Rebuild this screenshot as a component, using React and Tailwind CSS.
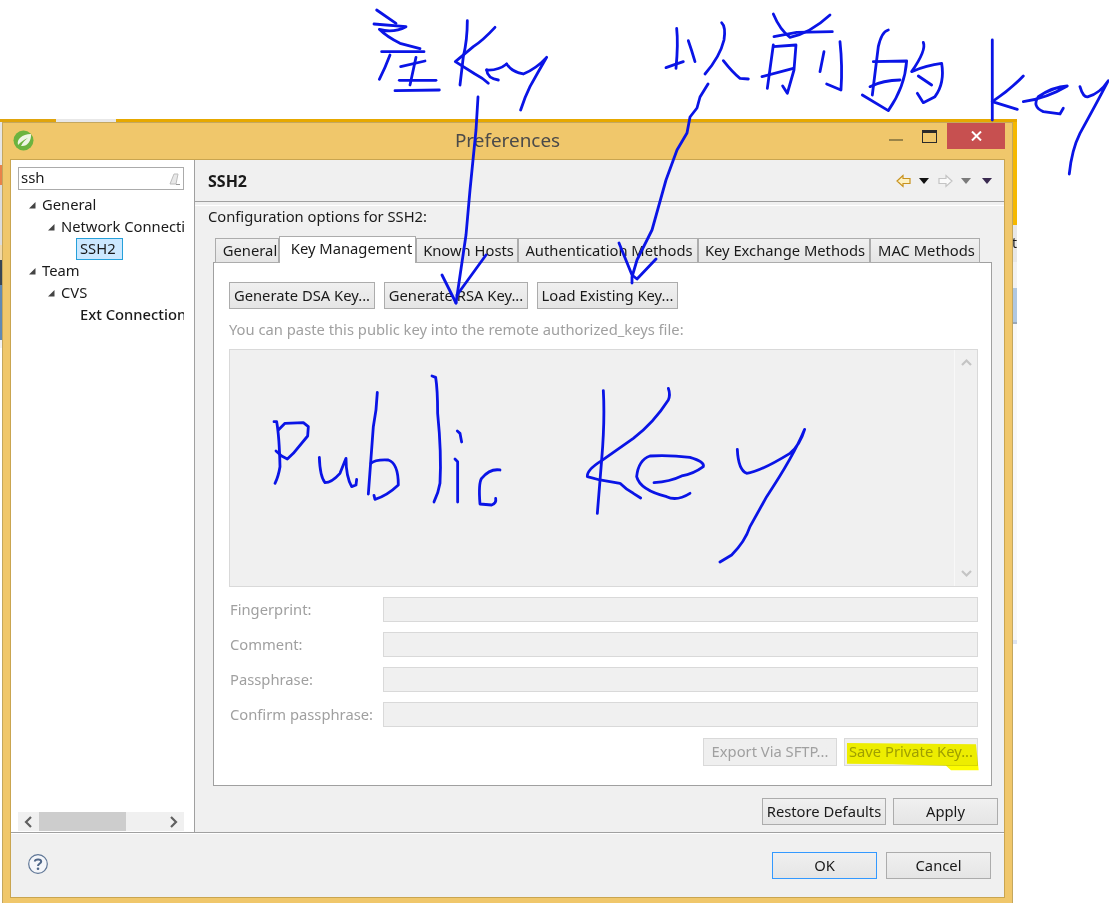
import React from 'react';

const tree = [
  { label: 'General', depth: 0, open: true },
  { label: 'Network Connections', depth: 1, open: true },
  { label: 'SSH2', depth: 2, selected: true },
  { label: 'Team', depth: 0, open: true },
  { label: 'CVS', depth: 1, open: true },
  { label: 'Ext Connection Method', depth: 2, semi: true },
];

const tabs = [
  { label: 'General', w: 'w-[64px] pl-[6px]' },
  { label: 'Key Management', w: 'w-[137px] pl-[8px]', active: true },
  { label: 'Known Hosts', w: 'w-[102px] pl-[3px]' },
  { label: 'Authentication Methods', w: 'w-[180px] pl-[2px]' },
  { label: 'Key Exchange Methods', w: 'w-[172px] pl-[2px]' },
  { label: 'MAC Methods', w: 'w-[110px] pl-[3px]' },
];

const fields = ['Fingerprint:', 'Comment:', 'Passphrase:', 'Confirm passphrase:'];

function Btn({ children, className = '', disabled }) {
  return (
    <button
      className={`flex items-center justify-center pb-[1px] border bg-gradient-to-b ${
        disabled
          ? 'border-[#d9d9d9] from-[#efefef] to-[#efefef] text-[#a0a0a0]'
          : 'border-[#acacac] from-[#f0f0f0] to-[#e5e5e5] text-[#1a1a1a]'
      } ${className}`}
    >
      {children}
    </button>
  );
}

function Triangle() {
  return (
    <svg width="8" height="8" viewBox="0 0 8 8" className="shrink-0">
      <path d="M7.5 1L7.5 7.5L1 7.5Z" fill="#444" />
    </svg>
  );
}

function SpringLogo() {
  return (
    <svg width="21" height="21" viewBox="0 0 21 21">
      <circle cx="10.5" cy="10.5" r="10" fill="#6cb33f" />
      <path d="M5 15C3.5 9 9 4.5 18 4C18.5 11 14 17 8 16C10 12 12 10 15 8C11 9.500 8 12 5 15Z" fill="#eef5e4" />
    </svg>
  );
}

function NavArrow({ dir, active }) {
  const d = dir === 'left' ? 'M7 1.500L1 7L7 12.500V9.500H14V4.500H7Z' : 'M8 1.500L14 7L8 12.500V9.500H1V4.500H8Z';
  return (
    <svg width="15" height="14" viewBox="0 0 15 14">
      <path d={d} fill={active ? '#fdf0c0' : '#fafafa'} stroke={active ? '#c8921e' : '#c4c4c4'} strokeWidth="1.200" />
    </svg>
  );
}

function DropTri({ color }) {
  return (
    <svg width="10" height="6" viewBox="0 0 10 6">
      <path d="M0 0H10L5 6Z" fill={color} />
    </svg>
  );
}

function Chevron({ d, color, w = 9, h = 12 }) {
  return (
    <svg width={w} height={h} viewBox={`0 0 ${w} ${h}`}>
      <path d={d} fill="none" stroke={color} strokeWidth="2.200" />
    </svg>
  );
}

// yellow marker over the Save Private Key button
function Highlight() {
  return (
    <svg
      width="134"
      height="30"
      viewBox="503 65 402 90"
      className="absolute left-[847px] top-[742px] z-20 mix-blend-multiply pointer-events-none"
    >
      <path d="M503 68L890 72L898 150L815 150L800 136L640 132L503 130Z" fill="#fdfd00" />
    </svg>
  );
}

// the pen strokes drawn over the screenshot, coordinates as read off the 3x crops
function Scribbles() {
  return (
    <svg
      width="1109"
      height="903"
      viewBox="0 0 1109 903"
      fill="none"
      stroke="#0a14e6"
      strokeLinecap="round"
      strokeLinejoin="round"
      className="absolute left-0 top-0 z-20 pointer-events-none"
    >
      <g transform="translate(350 0) scale(0.3333)" strokeWidth="8.400">
        <path d="M80 30L138 70" />
        <path d="M72 72L168 80Q130 100 88 88Q110 110 150 130L210 146" />
        <path d="M95 155L222 155" />
        <path d="M120 165Q105 205 88 238" />
        <path d="M152 200L225 183" />
        <path d="M198 172L180 255" />
        <path d="M148 241L258 241" />
        <path d="M135 272L268 270" />
        <path d="M352 62Q352 120 340 170L330 255" />
        <path d="M435 82Q400 120 370 140L316 185L375 222Q400 235 415 250" />
        <path d="M410 210Q445 212 470 192" />
        <path d="M410 210Q412 235 445 240" />
        <path d="M470 192Q485 215 520 222Q560 205 590 172Q565 215 540 260Q525 290 512 330" />
      </g>
      <g transform="translate(640 0) scale(0.3333)" strokeWidth="8.400">
        <path d="M110 85Q115 130 108 205" />
        <path d="M78 203Q100 195 130 185" />
        <path d="M145 122Q155 150 165 185" />
        <path d="M245 68Q258 80 252 120Q240 170 195 222" />
        <path d="M250 182Q280 220 300 235L325 237" />
        <path d="M400 42Q420 90 450 112Q510 100 570 45" />
        <path d="M402 110L470 97L577 95" />
        <path d="M400 135L382 265" />
        <path d="M400 140L468 135L462 210L442 280L428 258" />
        <path d="M366 230L460 205" />
        <path d="M552 155L540 215" />
        <path d="M600 125Q608 200 603 270L560 252" />
        <path d="M745 90Q725 95 715 140L697 285" />
        <path d="M700 185L800 183Q795 260 745 332L667 285" />
        <path d="M690 260Q730 240 780 240" />
        <path d="M850 127Q860 150 815 215Q860 195 905 190Q915 250 885 290L850 308L832 280" />
        <path d="M835 228L875 255" />
        <path d="M1057 120L1057 360" />
        <path d="M1150 228Q1110 270 1057 305L1132 328" />
        <path d="M1150 305Q1220 295 1282 258Q1240 260 1195 290Q1175 320 1210 335L1260 342L1270 325" />
        <path d="M1320 260Q1330 295 1345 290Q1380 280 1405 242Q1370 310 1320 400Q1295 450 1288 522" />
      </g>
      <g strokeWidth="2.800">
        <path d="M478 97L476 130L470 190L466 235L456 303" />
        <path d="M442 275L456 303" />
        <path d="M486 255L457 295" />
        <path d="M708 84L700 97L697 108L690 117L687 133L677 150L666 180L652 230L637 260L632 277V283" />
        <path d="M619 243L632 275L637 279L656 259" />
      </g>
      <g transform="translate(260 370) scale(0.3333)" strokeWidth="8.400">
        <path d="M42 155L50 155Q58 200 60 290Q55 320 45 340" />
        <path d="M55 180L75 160L130 158L145 170L143 198L100 250L82 267L65 258L48 243" />
        <path d="M178 262Q180 320 195 338Q215 338 240 310L258 265Q258 320 275 350L288 345L290 328" />
        <path d="M352 67Q350 120 340 170L325 372" />
        <path d="M333 280Q345 268 385 270Q415 280 415 345Q380 378 345 388L342 376" />
        <path d="M516 18L527 22Q533 60 533 130Q545 250 540 340Q535 370 522 396" />
        <path d="M592 183L600 190L605 216" />
        <path d="M585 267L593 275L593 396" />
        <path d="M720 300Q690 295 665 325Q655 340 660 402L695 405Q710 400 707 385" />
      </g>
      <g transform="translate(570 370) scale(0.3333)" strokeWidth="8.400">
        <path d="M100 62Q105 150 95 270L82 430" />
        <path d="M295 55Q302 75 295 90Q250 160 190 205L95 272Q50 300 52 320L90 330L150 340Q170 360 190 370L212 384" />
        <path d="M252 338Q300 335 335 318Q370 312 400 290Q405 275 360 262Q300 255 240 258Q205 270 200 320Q210 360 290 380Q320 395 360 370" />
        <path d="M502 238Q505 300 530 310Q570 305 660 250Q690 225 704 178Q670 260 590 380L540 470Q525 515 485 555L450 576" />
      </g>
    </svg>
  );
}

export default function App() {
  return (
    <div className="relative w-[1109px] h-[903px] overflow-hidden bg-white font-['Noto_Sans',sans-serif] text-[14.75px] text-[#1a1a1a]">
      {/* bits of the desktop showing behind the dialog */}
      <div className="absolute left-0 top-[119px] w-[1017px] h-[3px] flex">
        <div className="w-[56px] bg-[#e0a40c]" />
        <div className="w-[60px] bg-[#e8e8e8]" />
        <div className="flex-1 bg-[#e6a800]" />
      </div>
      <div className="absolute left-0 top-[122px] w-[2px] flex flex-col">
        <div className="h-[43px] bg-[#e6e6e6]" />
        <div className="h-[20px] bg-[#e8824a]" />
        <div className="h-[60px] bg-[#dcdcdc]" />
        <div className="h-[15px] bg-[#f0d8a8]" />
        <div className="h-[25px] bg-[#3a4654]" />
        <div className="h-[55px] bg-[#6089b4]" />
        <div className="h-[8px] bg-[#f2f2f2]" />
      </div>
      <div className="absolute left-[1013px] top-[122px] w-[4px] flex flex-col overflow-hidden">
        <div className="h-[103px] bg-[#f5b800]" />
        <div className="h-[37px] bg-[#e8e8e8] leading-[36px] text-[14px] -indent-[1px]">t</div>
        <div className="h-[26px] bg-[#f2f2f2]" />
        <div className="h-[34px] bg-[#b0c8e2]" />
        <div className="h-[2px] bg-[#9aa8b8]" />
        <div className="h-[316px] bg-[#f8f8f8]" />
        <div className="h-[4px] bg-[#dde4f2]" />
      </div>

      {/* dialog */}
      <div className="absolute left-[2px] top-[122px] w-[1011px] h-[781px] flex flex-col border-x border-t border-[#c4a75f] bg-[#f0c76b]">
        <div className="h-[36px] shrink-0 grid grid-cols-[1fr_auto_1fr]">
          <div className="pl-[10px] pt-[7px]">
            <SpringLogo />
          </div>
          <div className="text-[18.900px] leading-[34px] text-[#4a4a4a]">Preferences</div>
          <div className="flex justify-end pr-[7px]">
            <div className="mt-[16px] mr-[19px] w-[14px] h-[2px] bg-[#9a8448]" />
            <div className="mt-[7px] mr-[10px] w-[15px] h-[13px] border border-[#2a2a2a] border-t-[3px]" />
            <div className="w-[58px] h-[26px] bg-[#c75050] flex items-center justify-center">
              <svg width="11" height="10" viewBox="0 0 11 10">
                <path d="M1 0.500L10 9.500M10 0.500L1 9.500" stroke="#fff" strokeWidth="2" />
              </svg>
            </div>
          </div>
        </div>

        <div className="ml-[7px] w-[995px] h-[739px] flex flex-col border border-[#c9a550] bg-[#f0f0f0]">
          <div className="flex h-[672px]">
            {/* tree side */}
            <div className="w-[184px] shrink-0 flex flex-col bg-white border-r border-[#a0a0a0]">
              <div className="ml-[7px] mt-[7px] w-[166px] h-[23px] border border-[#ababab] flex items-center justify-between pl-[2px] pr-[3px]">
                <span className="text-[15px] pb-[2px]">ssh</span>
                <svg width="14" height="14" viewBox="0 0 14 14">
                  <path d="M4 12L8 2H12L10 12Z" fill="#e8e8e8" stroke="#bdbdbd" />
                  <path d="M10 12.500H14" stroke="#9a9a9a" />
                </svg>
              </div>
              <div className="flex-1 mt-[4px] ml-[7px] w-[166px] overflow-hidden">
                {tree.map((t) => (
                  <div
                    key={t.label}
                    className={`h-[22px] flex items-center whitespace-nowrap ${
                      t.depth === 0 ? 'pl-[10px]' : t.depth === 1 ? 'pl-[29px]' : 'pl-[58px]'
                    }`}
                  >
                    {t.open && <Triangle />}
                    {t.selected ? (
                      <span className="pl-[3px] w-[47px] h-[22px] leading-[19px] bg-[#cce8ff] border border-[#26a0da]">{t.label}</span>
                    ) : (
                      <span className={`pb-[1px] ${t.open ? 'ml-[6px]' : 'pl-[4px]'} ${t.semi ? 'font-medium' : ''}`}>{t.label}</span>
                    )}
                  </div>
                ))}
              </div>
              <div className="ml-[7px] mb-[1px] w-[166px] h-[19px] flex items-center bg-[#f0f0f0]">
                <div className="w-[21px] flex justify-center">
                  <Chevron d="M7 1L2 6L7 11" color="#606060" />
                </div>
                <div className="w-[87px] h-[19px] bg-[#cdcdcd]" />
                <div className="flex-1 flex justify-end pr-[6px]">
                  <Chevron d="M2 1L7 6L2 11" color="#606060" />
                </div>
              </div>
            </div>

            {/* page side */}
            <div className="flex-1 flex flex-col">
              <div className="h-[42px] shrink-0 flex items-center justify-between border-b border-[#a0a0a0] pl-[13px] pr-[12px]">
                <span className="font-bold text-[16px]">SSH2</span>
                <div className="flex items-center">
                  <NavArrow dir="left" active />
                  <span className="ml-[8px]"><DropTri color="#111" /></span>
                  <span className="ml-[9px]"><NavArrow dir="right" /></span>
                  <span className="ml-[8px]"><DropTri color="#7a7a7a" /></span>
                  <span className="ml-[11px]"><DropTri color="#3a2a50" /></span>
                </div>
              </div>
              <div className="border-t border-white pl-[13px] mt-[3px] h-[20px] leading-[20px]">Configuration options for SSH2:</div>

              <div className="ml-[20px] mt-[11px] h-[27px] flex items-end relative z-10">
                {tabs.map((t) => (
                  <div
                    key={t.label}
                    className={`${t.w} flex items-center justify-center whitespace-nowrap border border-[#acacac] ${
                      t.active
                        ? 'h-[27px] bg-white border-b-0 pb-[3px]'
                        : 'h-[25px] pb-[1px] bg-[#f0f0f0] bg-gradient-to-b from-[#f0f0f0] to-[#e5e5e5]'
                    }`}
                  >
                    {t.label}
                  </div>
                ))}
              </div>

              <div className="ml-[18px] -mt-[1px] w-[779px] h-[524px] bg-white border border-[#a0a0a0] pl-[15px] pr-[13px] pt-[19px]">
                <div className="flex gap-[9px]">
                  <Btn className="w-[146px] h-[27px]">Generate DSA Key...</Btn>
                  <Btn className="w-[144px] h-[27px]">Generate RSA Key...</Btn>
                  <Btn className="w-[141px] h-[27px]">Load Existing Key...</Btn>
                </div>
                <div className="mt-[10px] h-[20px] leading-[20px] text-[#a0a0a0]">You can paste this public key into the remote authorized_keys file:</div>
                <div className="mt-[10px] h-[238px] flex justify-end bg-[#f0f0f0] border border-[#d9d9d9]">
                  <div className="w-[23px] flex flex-col items-center justify-between py-[8px] border-l border-[#f8f8f8]">
                    <Chevron d="M1 7L5.500 2.500L10 7" color="#c4c4c4" w={11} h={9} />
                    <Chevron d="M1 2L5.500 6.500L10 2" color="#c4c4c4" w={11} h={9} />
                  </div>
                </div>
                {fields.map((f) => (
                  <div key={f} className="mt-[10px] h-[25px] flex items-center">
                    <span className="w-[154px] pl-[1px] pb-[1px] text-[#a0a0a0]">{f}</span>
                    <div className="flex-1 h-[25px] bg-[#f0f0f0] border border-[#d9d9d9]" />
                  </div>
                ))}
                <div className="mt-[11px] flex justify-end gap-[7px]">
                  <Btn disabled className="w-[134px] h-[28px]">Export Via SFTP...</Btn>
                  <Btn disabled className="w-[134px] h-[28px]">Save Private Key...</Btn>
                </div>
              </div>

              <div className="mt-[12px] flex justify-end gap-[7px] pr-[6px]">
                <Btn className="w-[124px] h-[27px]">Restore Defaults</Btn>
                <Btn className="w-[105px] h-[27px]">Apply</Btn>
              </div>
            </div>
          </div>

          <div className="flex-1 flex items-start justify-between border-t border-[#a0a0a0] shadow-[inset_0_1px_0_#fff] pl-[17px] pr-[13px]">
            <svg width="20" height="20" viewBox="0 0 20 20" className="mt-[21px]">
              <circle cx="10" cy="10" r="9.300" fill="#f4f6fa" stroke="#5f7696" strokeWidth="1.200" />
              <path d="M6.800 7.500C7 5 13 4.500 13.200 7.500C13.300 9.500 10 9.500 10 12" fill="none" stroke="#4f6688" strokeWidth="2" />
              <circle cx="10" cy="14.800" r="1.300" fill="#4f6688" />
            </svg>
            <div className="flex gap-[9px] mt-[19px]">
              <Btn className="w-[105px] h-[27px] !border-[#3399ff]">OK</Btn>
              <Btn className="w-[105px] h-[27px]">Cancel</Btn>
            </div>
          </div>
        </div>
      </div>

      <Highlight />
      <Scribbles />
    </div>
  );
}
